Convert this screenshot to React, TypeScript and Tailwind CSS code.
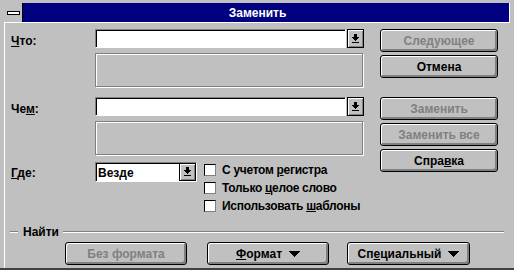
import React from "react";

const font = { fontFamily: '"Liberation Sans", Arial, sans-serif' };

function ComboArrow() {
  return (
    <svg width="9" height="10" viewBox="0 0 9 10" shapeRendering="crispEdges">
      <rect x="3" y="0" width="3" height="3" fill="#000" />
      <rect x="1" y="3" width="7" height="1" fill="#000" />
      <rect x="2" y="4" width="5" height="1" fill="#000" />
      <rect x="3" y="5" width="3" height="1" fill="#000" />
      <rect x="4" y="6" width="1" height="1" fill="#000" />
      <rect x="1" y="8" width="7" height="1" fill="#000" />
    </svg>
  );
}

function MenuTriangle() {
  return (
    <svg width="11" height="6" viewBox="0 0 11 6" shapeRendering="crispEdges" className="ml-[7px]">
      <polygon points="0,0 11,0 5.5,6" fill="#000" />
    </svg>
  );
}

function DropButton() {
  return (
    <div className="flex h-full w-[17px] items-center justify-center border border-black bg-[#c0c0c0] shadow-[inset_1px_1px_0_#fff,inset_-1px_-1px_0_#808080]">
      <ComboArrow />
    </div>
  );
}

function Combo() {
  return (
    <div className="flex h-[19px]">
      <div className="h-full w-[251px] border border-[#808080] border-b-white border-r-white bg-white shadow-[inset_1px_1px_0_#000]" />
      <div className="ml-[1px] h-full">
        <DropButton />
      </div>
    </div>
  );
}

function FormatBox() {
  return <div className="mt-[5px] h-[34px] w-[268px] border border-[#808080] shadow-[inset_1px_1px_0_#fff,1px_1px_0_#fff]" />;
}

function Btn({ children, disabled, className = "" }: { children: React.ReactNode; disabled?: boolean; className?: string }) {
  return (
    <div
      className={
        "flex h-[23px] items-center justify-center rounded-[3px] border border-black bg-[#c0c0c0] text-[12px] font-bold shadow-[inset_1px_1px_0_#fff,inset_-2px_-2px_0_#808080] " +
        (disabled ? "text-[#808080] " : "text-black ") +
        className
      }
    >
      {children}
    </div>
  );
}

function Check({ children }: { children: React.ReactNode }) {
  return (
    <div className="flex h-[18px] items-center">
      <div className="h-[12px] w-[12px] border border-black border-b-[#808080] border-r-[#808080] bg-white" />
      <span className="ml-[6px] tracking-[-0.3px]">{children}</span>
    </div>
  );
}

export default function App() {
  return (
    <div
      className="flex h-[270px] w-[514px] flex-col border-b-2 border-[#404040] bg-[#c0c0c0] pl-[4px] pr-[4px] pt-[3px] text-[12px] font-bold text-black"
      style={font}
    >
      {/* title bar */}
      <div className="flex h-[19px]">
        <div className="flex w-[19px] items-center justify-center border-r border-black">
          <div className="h-[4px] w-[13px] border border-black bg-white" />
        </div>
        <div className="flex flex-1 items-center justify-center border-r border-white bg-[#000080] pr-[17px] text-white">
          Заменить
        </div>
      </div>

      {/* client area */}
      <div className="flex flex-1 flex-col border-l border-t border-white pl-[5px] pt-[6px]">
        <div className="flex">
          <div className="w-[370px]">
            <div className="flex">
              <div className="flex h-[19px] w-[85px] items-center pt-[4px] pl-[1px]">
                <span>
                  <u>Ч</u>то:
                </span>
              </div>
              <div>
                <Combo />
                <FormatBox />
              </div>
            </div>

            <div className="mt-[10px] flex">
              <div className="flex h-[19px] w-[85px] items-center pt-[4px] pl-[1px]">
                <span>
                  Че<u>м</u>:
                </span>
              </div>
              <div>
                <Combo />
                <FormatBox />
              </div>
            </div>

            <div className="mt-[7px] flex">
              <div className="flex h-[20px] w-[85px] items-center pt-[2px] pl-[1px]">
                <span>
                  <u>Г</u>де:
                </span>
              </div>
              <div className="flex h-[20px] w-[102px] border border-[#808080] border-b-white border-r-white bg-white shadow-[inset_1px_1px_0_#000]">
                <div className="flex flex-1 items-center pl-[2px] pt-[1px]">Везде</div>
                <DropButton />
              </div>
              <div className="-mt-[1px] ml-[7px] flex flex-col">
                <Check>
                  С учетом <u>р</u>егистра
                </Check>
                <Check>
                  Только <u>ц</u>елое слово
                </Check>
                <Check>
                  Использовать <u>ш</u>аблоны
                </Check>
              </div>
            </div>
          </div>

          <div className="flex w-[118px] flex-col">
            <Btn disabled>Следующее</Btn>
            <Btn className="mt-[3px]">Отмена</Btn>
            <Btn disabled className="mt-[19px]">
              Заменить
            </Btn>
            <Btn disabled className="mt-[3px]">
              Заменить все
            </Btn>
            <Btn className="mt-[3px]">
              Спра<u>в</u>ка
            </Btn>
          </div>
        </div>

        {/* group line */}
        <div className="mt-[10px] flex h-[14px] w-[494px] items-center">
          <div className="h-[2px] w-[8px] border-b border-t border-b-white border-t-[#808080]" />
          <span className="ml-[5px] mr-[4px]">Найти</span>
          <div className="h-[2px] flex-1 border-b border-t border-b-white border-t-[#808080]" />
        </div>

        <div className="mt-[3px] flex pl-[55px]">
          <Btn disabled className="w-[122px]">
            Без формата
          </Btn>
          <Btn className="ml-[20px] w-[122px]">
            <u>Ф</u>ормат
            <MenuTriangle />
          </Btn>
          <Btn className="ml-[18px] w-[123px]">
            Сп<u>е</u>циальный
            <MenuTriangle />
          </Btn>
        </div>
      </div>
    </div>
  );
}
